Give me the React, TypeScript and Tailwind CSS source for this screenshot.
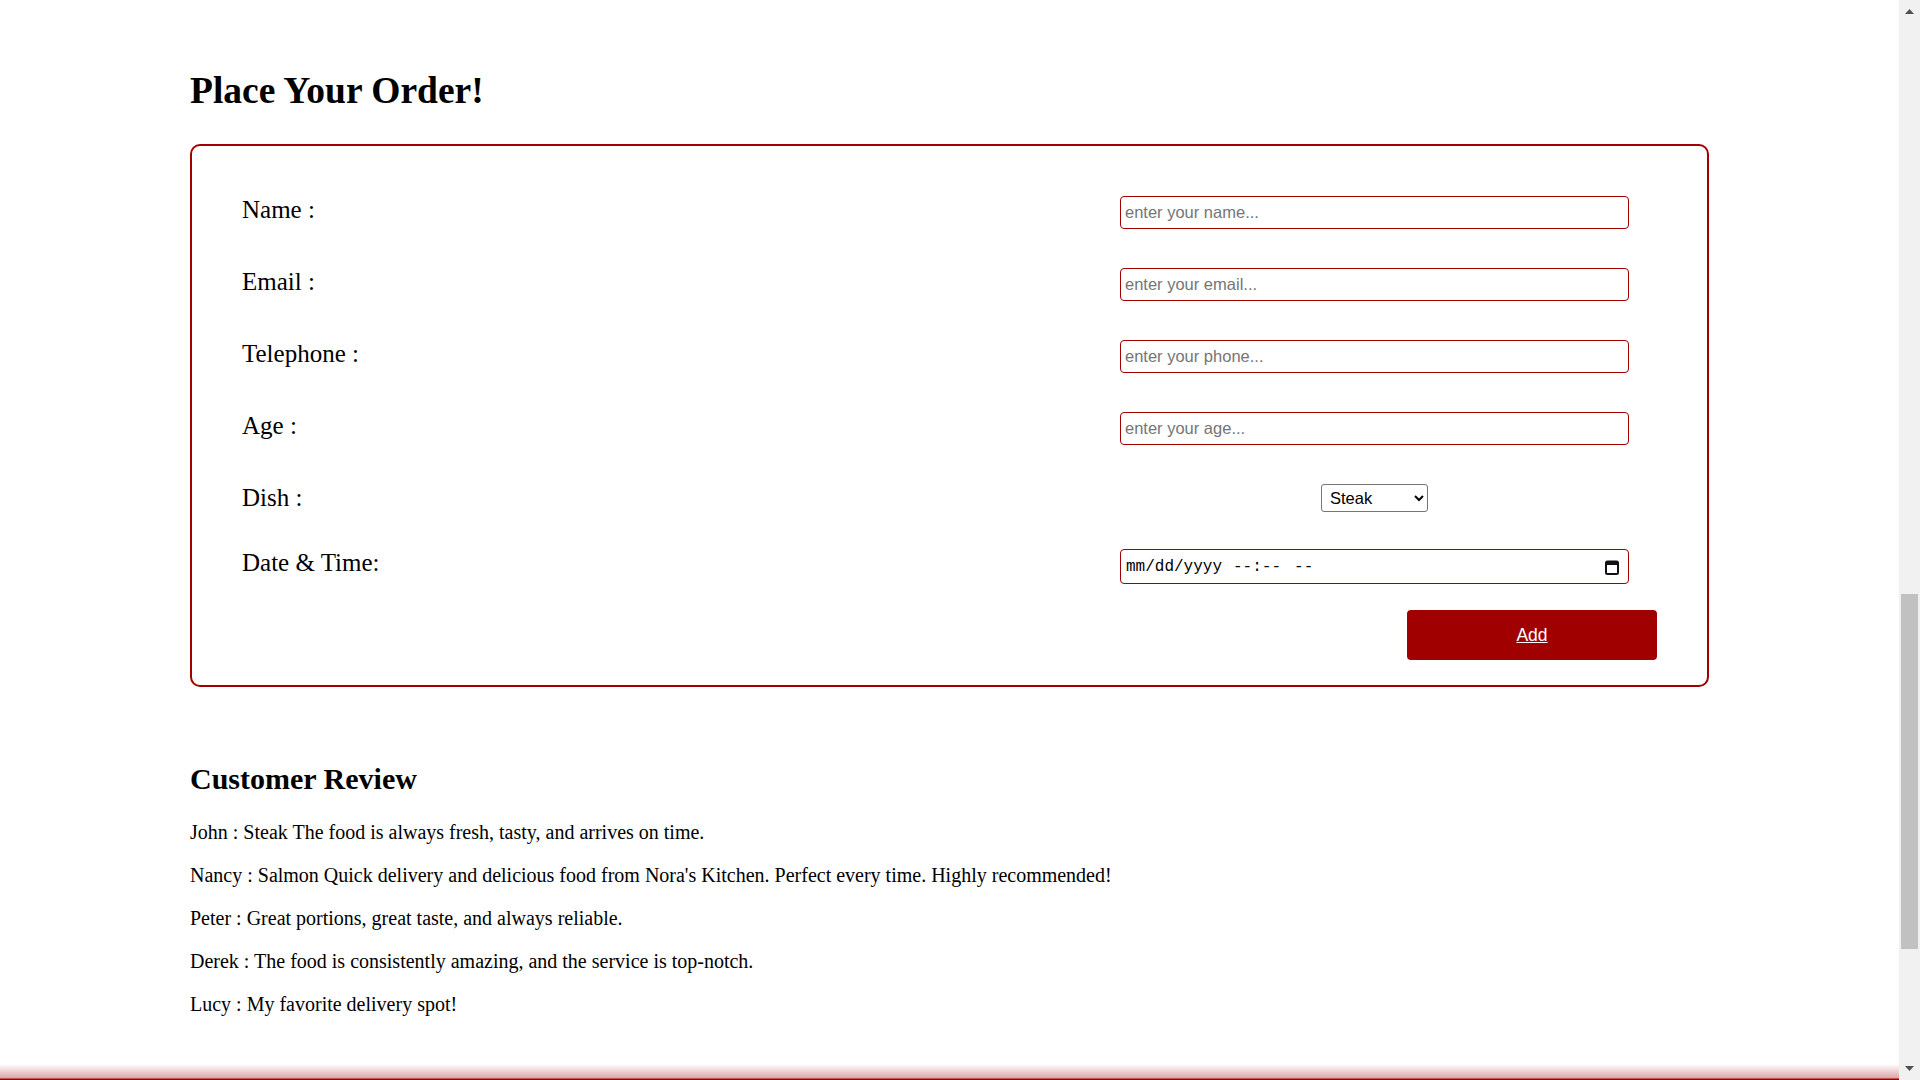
import React from 'react';

const fields = [
  { label: 'Name :', type: 'text', placeholder: 'enter your name...' },
  { label: 'Email :', type: 'email', placeholder: 'enter your email...' },
  { label: 'Telephone :', type: 'tel', placeholder: 'enter your phone...' },
  { label: 'Age :', type: 'number', placeholder: 'enter your age...' },
];

const reviews = [
  'John : Steak The food is always fresh, tasty, and arrives on time.',
  "Nancy : Salmon Quick delivery and delicious food from Nora's Kitchen. Perfect every time. Highly recommended!",
  'Peter : Great portions, great taste, and always reliable.',
  'Derek : The food is consistently amazing, and the service is top-notch.',
  'Lucy : My favorite delivery spot!',
];

const Scrollbar: React.FC = () => {
  return (
    <div className="flex w-[21px] flex-col bg-[#f1f1f1]">
      <div className="flex h-[17px] items-start justify-center pt-[9px]">
        <svg width="9" height="5" viewBox="0 0 9 5">
          <polygon points="0,5 4.5,0 9,5" fill="#505050" />
        </svg>
      </div>
      <div className="flex-1">
        <div className="mx-[2px] mt-[577px] h-[355px] bg-[#c1c1c1]" />
      </div>
      <div className="flex h-[17px] items-end justify-center pb-[9px]">
        <svg width="9" height="5" viewBox="0 0 9 5">
          <polygon points="0,0 4.5,5 9,0" fill="#505050" />
        </svg>
      </div>
    </div>
  );
};

// date-time field drawn the way the browser shows an empty datetime-local input
const DateTimeField: React.FC = () => {
  return (
    <div className="mr-[28px] flex h-[35px] w-[509px] items-center rounded-[4px] border border-[#a00000] bg-white pl-[5px] pr-[9px] pt-[1px] font-['Liberation_Mono',monospace] text-[16px] text-black">
      <span>mm/dd/yyyy</span>
      <span className="ml-[11px]">--:--</span>
      <span className="ml-[13px]">--</span>
      <svg className="ml-auto" width="14" height="16" viewBox="0 0 14 16">
        <rect x="1" y="2.5" width="12" height="12.5" rx="1.5" fill="none" stroke="#111" strokeWidth="2" />
        <rect x="1" y="2.5" width="12" height="3.5" fill="#111" />
      </svg>
    </div>
  );
};

export default function App() {
  return (
    <div className="flex h-[1080px] w-[1920px] overflow-hidden bg-white font-['Liberation_Serif',serif] leading-[normal] text-black">
      <div className="flex flex-1 flex-col">
        <main className="flex-1 pl-[190px] pt-[69px]">
          <h1 className="text-[37.5px] font-bold">Place Your Order!</h1>

          {/* Order form */}
          <form className="mt-[32px] w-[1519px] rounded-[10px] border-2 border-[#a00000] px-[50px] pb-[25px] pt-[50px]">
            {fields.map((f) => (
              <div key={f.label} className="mb-[39px] flex items-start">
                <label className="flex-1 text-[25px]">{f.label}</label>
                <input
                  type={f.type}
                  placeholder={f.placeholder}
                  className="mr-[28px] h-[33px] w-[509px] rounded-[4px] border border-[#a00000] bg-white px-[4px] font-['Liberation_Sans',sans-serif] text-[16.5px] text-black placeholder:text-[#757575]"
                />
              </div>
            ))}

            <div className="mb-[37px] flex items-start">
              <label className="flex-1 text-[25px]">Dish :</label>
              <div className="mr-[28px] flex w-[509px] justify-center">
                <select className="h-[28px] w-[107px] rounded-[3px] border border-[#767676] bg-white pl-[4px] font-['Liberation_Sans',sans-serif] text-[16.5px] text-black">
                  <option>Steak</option>
                  <option>Salmon</option>
                  <option>Pasta</option>
                </select>
              </div>
            </div>

            <div className="mb-[26px] flex items-start">
              <label className="flex-1 text-[25px]">Date &amp; Time:</label>
              <DateTimeField />
            </div>

            <div className="flex justify-end">
              <button
                type="button"
                className="h-[50px] w-[250px] rounded-[4px] bg-[#a00000] font-['Liberation_Sans',sans-serif] text-[17.5px] text-white underline"
              >
                Add
              </button>
            </div>
          </form>

          {/* Reviews */}
          <section className="mt-[75px]">
            <h2 className="text-[30px] font-bold">Customer Review</h2>
            <div className="mt-[25px] flex flex-col gap-[20px] text-[20px]">
              {reviews.map((r) => (
                <p key={r}>{r}</p>
              ))}
            </div>
          </section>
        </main>
        <div className="h-[16px] bg-[linear-gradient(to_top,#a00000_0px,#a00000_1px,rgba(160,0,0,0.35)_2px,rgba(160,0,0,0)_16px)]" />
      </div>
      <Scrollbar />
    </div>
  );
}
